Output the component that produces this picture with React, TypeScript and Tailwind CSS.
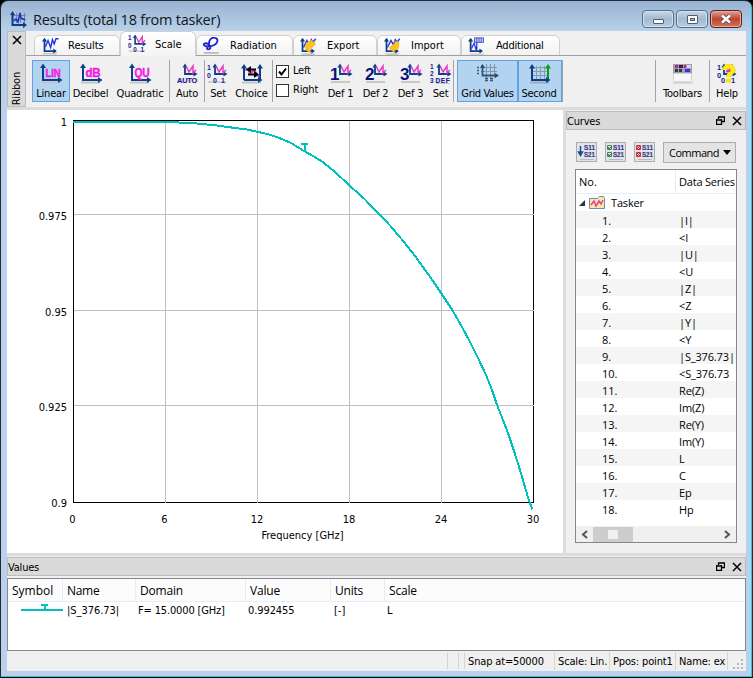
import React from 'react';

const NAVY = '#0d3f86';
const INK = '#1c1c90';
const PINK = '#f01fe0';

const CURVE =
  '66,11.5 121,11.5 122,12 172,12.5 190,13.5 210,15.5 226,17.7 240,19.5 250,21.7 262,24.500 273,28.2 284,33 297,41 306,46 315,51.5 327,61 343,76 357,88.500 372,104 383,115.5 397,132 408,146 417,158.500 426,171 434,183 445,199.5 455,217 463,232 471,248 479,265 485,280 490,295 496,310 501,323 507,341 513,360 518,377 522,391 525.5,399.5';

type IconProps = { children?: React.ReactNode; className?: string };

function Icon({ children, className = '' }: IconProps) {
  return (
    <svg width="24" height="22" viewBox="0 0 24 22" className={`block shrink-0 ${className}`} fill="none">
      {children}
    </svg>
  );
}

/* L-shaped pair of axes with arrow heads, origin at x,y */
function Axes({ x = 4, y = 17, w = 17, h = 14, shadow = true }) {
  return (
    <g>
      {shadow && <path d={`M${x - 2} ${y + 2.5}h${w + 2}`} stroke="#c4c4c4" strokeWidth="2" />}
      <path d={`M${x} ${y - h}v${h}h${w - 1}`} stroke={NAVY} strokeWidth="2" />
      <path d={`M${x - 3} ${y - h + 2}l3-4.500 3 4.500zM${x + w - 2} ${y - 3}l4.500 3-4.500 3z`} fill={NAVY} />
    </g>
  );
}

function SmallAxes({ x = 11, y = 11 }) {
  return (
    <g>
      <path d={`M${x} ${y - 8}v8h11`} stroke={NAVY} strokeWidth="1.8" />
      <path d={`M${x - 2.5} ${y - 6.5}l2.5-4 2.5 4zM${x + 8.5} ${y - 2.5}l4 2.5-4 2.5z`} fill={NAVY} />
      <path d={`M${x + 1} ${y - 8}l3 6 4-6v7l3-3`} stroke="#e63cc8" strokeWidth="1.5" />
    </g>
  );
}

function Glyph({ x, y, size = 7.5, fill = INK, children }: { x: number; y: number; size?: number; fill?: string; children: string }) {
  return (
    <text x={x} y={y} fontSize={size} fill={fill} fontWeight="700" fontFamily="Liberation Sans, sans-serif">
      {children}
    </text>
  );
}

function LetterIcon({ text, size = 11 }: { text: string; size?: number }) {
  return (
    <Icon>
      <Axes />
      <text x="6.5" y="14" fontSize={size} fontWeight="700" fill={PINK} stroke={PINK} strokeWidth=".5" textLength="15" lengthAdjust="spacingAndGlyphs" fontFamily="Liberation Sans, sans-serif">
        {text}
      </text>
    </Icon>
  );
}

const autoIcon = (
  <Icon>
    <SmallAxes x={10} y={11} />
    <text x="2" y="19.5" fontSize="8" fontWeight="700" fill={INK} stroke={INK} strokeWidth=".2" textLength="20" lengthAdjust="spacingAndGlyphs" fontFamily="Liberation Sans, sans-serif">
      AUTO
    </text>
  </Icon>
);

const setIcon = (
  <Icon>
    <path d="M2 19h18" stroke="#cfcfcf" strokeWidth="2" />
    <SmallAxes x={9} y={11} />
    <Glyph x={1} y={6.5} size={7}>1</Glyph>
    <Glyph x={1} y={15} size={7}>0</Glyph>
    <Glyph x={7} y={20} size={7}>0</Glyph>
    <Glyph x={15} y={20} size={7}>1</Glyph>
  </Icon>
);

const choiceIcon = (
  <Icon>
    <path d="M2 19.5h19" stroke="#c4c4c4" strokeWidth="2" />
    <path d="M4 3v14M20 3v14M4 17h16" stroke={NAVY} strokeWidth="2" />
    <path d="M1 5.500L4 1l3 4.500zM17 5.500L20 1l3 4.500zM18 14l4.500 3-4.500 3z" fill={NAVY} />
    <path d="M5 7l3-1 2 5 4-4 5 7" stroke="#e23ec8" strokeWidth="2" />
    <path d="M9 6.500h7M8 11.500h8" stroke="#000" strokeWidth="2" />
    <path d="M6 6.500l5-3.500v7zM19 11.500L14 8v7z" fill="#000" />
  </Icon>
);

function DefIcon({ n }: { n: string }) {
  return (
    <Icon>
      <path d="M2 19h19" stroke="#c9c9c9" strokeWidth="2" />
      <SmallAxes x={11} y={11} />
      <Glyph x={1} y={17} size={17} fill="#10107c">{n}</Glyph>
    </Icon>
  );
}

const defSetIcon = (
  <Icon>
    <path d="M7 20.500h14" stroke="#c9c9c9" />
    <SmallAxes x={10} y={11} />
    <Glyph x={1} y={6} size={6.5}>1</Glyph>
    <Glyph x={1} y={12.8} size={6.5}>2</Glyph>
    <Glyph x={1} y={19.5} size={6.5}>3</Glyph>
    <text x="6.5" y="19.5" fontSize="6.5" fontWeight="700" fill={INK} stroke={INK} strokeWidth=".2" textLength="14" fontFamily="Liberation Sans, sans-serif">DEF</text>
  </Icon>
);

const gridIcon = (
  <Icon>
    <path d="M10.500 1v14M14.500 1v14M18.500 1v14M5 4.500h16M5 8.500h16" stroke="#8493a8" />
    <path d="M6.500 2v10.500h14" stroke="#31527c" strokeWidth="1.800" />
    <path d="M4 5l2.500-4L9 5zM19 10l4 2.500-4 2.500z" fill="#274a78" />
    <path d="M1 4.500h3M1 7.500h3M1 10.500h3" stroke="#556" strokeWidth="1.500" strokeDasharray="2 1" />
    <path d="M9 15.500h3M9 17.500h3M14 15.500h3M14 17.500h3" stroke="#456" strokeWidth="1.300" />
  </Icon>
);

const secondIcon = (
  <Icon>
    <path d="M2 19.500h19" stroke="#9ba9ba" strokeWidth="2" />
    <path d="M8.500 3v13M12.500 3v13M16.500 3v13M4 4.500h16M4 8.500h16M4 12.500h16" stroke="#8a9aad" />
    <path d="M4 3v14h16" stroke={NAVY} strokeWidth="2" />
    <path d="M20 3v13" stroke="#0c9a1c" strokeWidth="2" />
    <path d="M17 5.500L20 1l3 4.500z" fill="#0c9a1c" />
    <path d="M1 5.500L4 1l3 4.500zM18 14l4.500 3-4.500 3z" fill={NAVY} />
  </Icon>
);

const toolbarsIcon = (
  <Icon>
    <rect x="2" y="1" width="19" height="10" fill="#a0a0a8" />
    <path d="M4 3.500h3M13 3.500h2" stroke="#b0249a" strokeWidth="3" />
    <path d="M8 3.500h4" stroke="#4a1250" strokeWidth="3" />
    <path d="M16 3.500h4" stroke="#d8d8f0" strokeWidth="3" />
    <path d="M4 7.500h8" stroke="#2f3d38" strokeWidth="3" strokeDasharray="3 1" />
    <path d="M14 7.500h5" stroke="#4326ed" strokeWidth="3" />
    <rect x="2.500" y="10.500" width="18" height="8" rx="1" fill="#f8f8fa" stroke="#d4d4da" />
    <path d="M2 20h20" stroke="#bdbdbd" />
  </Icon>
);

const helpIcon = (
  <Icon>
    <SmallAxes x={9} y={11} />
    <path d="M9.500 7C9.500 2 19 2 18 7.500c-.5 2.500-4.500 2.500-4.500 6.500" stroke="#e0c000" strokeWidth="4.800" />
    <path d="M9.500 7C9.500 2 19 2 18 7.500c-.5 2.500-4.500 2.500-4.500 6.500" stroke="#ffee10" strokeWidth="4" />
    <rect x="11" y="15.500" width="5" height="4" rx="1" fill="#ffe600" />
    <path d="M11 9l3-2 1 2" stroke="#e22bbd" strokeWidth="1.500" />
    <Glyph x={2} y={7}>1</Glyph>
    <Glyph x={2} y={15}>0</Glyph>
    <Glyph x={6} y={20}>0</Glyph>
    <Glyph x={16} y={20}>1</Glyph>
  </Icon>
);

const resultsTabIcon = (
  <Icon className="scale-[.88] origin-top-left">
    <path d="M2 19h16" stroke="#cacaca" strokeWidth="2" />
    <path d="M4 2v14h13" stroke={NAVY} strokeWidth="2" />
    <path d="M1 5l3-4 3 4zM14 13l4 3-4 3z" fill={NAVY} />
    <path d="M5 11l3-7 3 8 2-9 2 5 2-6h3" stroke="#1f35e8" strokeWidth="1.600" />
  </Icon>
);

const radiationIcon = (
  <Icon className="scale-[.88] origin-top-left">
    <path d="M2 18h17" stroke="#b9b9b9" strokeWidth="2" />
    <path d="M8 10C7 2 12 0 15 1c4 1 3 6-1 8-4 2-9 2-11 1-3-2 1-4 4-2 4 3 3 6 0 6-2 0-2-3 1-4" stroke="#1a22cf" strokeWidth="2" />
  </Icon>
);

function ArrowTabIcon({ flip = false }: { flip?: boolean }) {
  return (
    <Icon className="scale-[.88] origin-top-left">
      <path d="M3 19.500h15" stroke="#cacaca" strokeWidth="2" />
      <path d="M4 2v14h13" stroke={NAVY} strokeWidth="2" />
      <path d="M1 5l3-4 3 4zM14 13l4 3-4 3z" fill={NAVY} />
      <path d="M5 12l4-8 3 5 2-6 2 3 3-4" stroke="#1f35e8" strokeWidth="1.600" />
      <path
        d={flip ? 'M18 6v4c0 3-2 5-5 5v3l-6-5.500 6-5.500v3c2 0 2-2 0-5 3 0 5 0 5 1z' : 'M7 11c0-4 3-6 6-6V2.500l6 5.500-6 5.500v-3c-2 0-2 4 1 7-4 0-7-3-7-6.500z'}
        fill="#ffc21a"
        stroke="#e8a810"
        strokeWidth=".6"
      />
    </Icon>
  );
}

const additionalIcon = (
  <Icon className="scale-[.88] origin-top-left">
    <path d="M3 2v14h13" stroke={NAVY} strokeWidth="2" />
    <path d="M0 5l3-4 3 4zM13 13l4 3-4 3z" fill={NAVY} />
    <rect x="7.500" y="1" width="10" height="5" fill="#c9d0fa" stroke="#3b44bd" />
    <path d="M10 1v5M12.500 1v5M15 1v5" stroke="#3b44bd" strokeWidth=".9" />
    <path d="M4 13l3-6 2 7 1-4V6M10 7v8" stroke="#1f35e8" strokeWidth="1.400" />
    <path d="M2 19.500h16" stroke="#cacaca" strokeWidth="1.500" />
  </Icon>
);

const appIcon = (
  <svg width="17" height="17" viewBox="0 0 17 17" fill="none">
    <path d="M6.500 2v10M10.500 2v10M14.500 2v10M2 4.500h14M2 8.500h14" stroke="#6f86a2" />
    <path d="M2.500 2v12H15" stroke={NAVY} strokeWidth="2" />
    <path d="M0 4l2.500-4L5 4zM13 11l4 3-4 3z" fill={NAVY} />
    <path d="M4 10l2-2 2 3 2-9 1 5 4 2" stroke="#2232c8" strokeWidth="1.600" />
  </svg>
);

const CROSS = (
  <svg width="10" height="10" viewBox="0 0 10 10">
    <path d="M1 1l8 8M9 1L1 9" stroke="#000" strokeWidth="1.500" />
  </svg>
);

function Tab({ label, icon, className, textClass = '' }: { label: string; icon: React.ReactNode; className: string; textClass?: string }) {
  return (
    <div className={`flex shrink-0 rounded-t-md border border-[#d0d0d0] ${className}`}>
      <div className="w-5 h-5 shrink-0">{icon}</div>
      <span className={`whitespace-nowrap leading-[14px] ${textClass}`}>{label}</span>
    </div>
  );
}

function Tool({ label, icon, className, textClass = '' }: { label: string; icon: React.ReactNode; className: string; textClass?: string }) {
  return (
    <div className={`flex flex-col items-center shrink-0 h-[42px] pt-[3px] ${className}`}>
      {icon}
      <span className={`mt-[2px] whitespace-nowrap leading-[14px] ${textClass}`}>{label}</span>
    </div>
  );
}

function Sep({ className = '' }: { className?: string }) {
  return <div className={`w-px h-[42px] shrink-0 bg-[#a3a3a3] ${className}`} />;
}

function DockTitle({ title }: { title: string }) {
  return (
    <div className="flex items-center h-[19px] shrink-0 bg-[#dadada] border border-[#bcbcbc] pr-[3px]">
      <span className="flex-1 pt-px leading-[17px] tracking-[-0.2px]">{title}</span>
      <svg width="9" height="9" viewBox="0 0 9 9" fill="none" className="mr-[7px]">
        <path d="M2.500 3V.5M2 1h7M8.500 1v4.500H6M.5 3v5.500h5V3M0 4h6" stroke="#000" strokeWidth="1.300" />
      </svg>
      {CROSS}
    </div>
  );
}

const SERIES = ['|I|', '<I', '|U|', '<U', '|Z|', '<Z', '|Y|', '<Y', '|S_376.73|', '<S_376.73', 'Re(Z)', 'Im(Z)', 'Re(Y)', 'Im(Y)', 'L', 'C', 'Ep', 'Hp'];

function SButton({ kind }: { kind: 'arrow' | 'on' | 'off' }) {
  return (
    <div className="w-[21px] h-5 border border-[#adadad] bg-[#e4e4e6]">
      <svg width="19" height="18" viewBox="0 0 19 18" fill="none">
        <path d="M3 16.500h14" stroke="#bbb" />
        {kind === 'arrow' ? (
          <path d="M3.500 3v7M1.500 9h4l-2 3.500z" stroke="#174f9d" fill="#174f9d" strokeWidth="1.500" />
        ) : (
          <>
            <path d="M1.500 2.500h4v4h-4zM1.500 9.500h4v4h-4z" stroke={kind === 'on' ? '#438268' : '#b83545'} fill={kind === 'on' ? '#d9eadf' : '#f5cad0'} />
            <path d={kind === 'on' ? 'M2 4l1 2 3-3M2 11l1 2 3-3' : 'M2 3l3 3M5 3L2 6M2 10l3 3M5 10l-3 3'} stroke={kind === 'on' ? '#157234' : '#df1522'} />
          </>
        )}
        <g fontSize="7" fontWeight="700" fill="#3a3a90" stroke="#3a3a90" strokeWidth=".2" fontFamily="Liberation Sans, sans-serif">
          <text x="7" y="7.200" textLength="11" lengthAdjust="spacingAndGlyphs">S11</text>
          <text x="7" y="14.200" textLength="11" lengthAdjust="spacingAndGlyphs">S21</text>
        </g>
      </svg>
    </div>
  );
}

function TitleBar() {
  return (
    <div className="flex items-start h-[29px] shrink-0 pl-[9px] pr-[10px]">
      <div className="pt-[9px]">{appIcon}</div>
      <span className="ml-[6px] mt-[8px] font-['Open_Sans',sans-serif] [font-stretch:normal] text-[14.5px] leading-5 tracking-[-0.24px] text-[#101820] whitespace-nowrap">
        Results (total 18 from tasker)
      </span>
      <div className="ml-auto mt-[8px] flex gap-[2px]">
        <div className="flex items-center justify-center w-8 h-[18px] rounded-sm border border-[#566d88] bg-linear-to-b from-[#c8d8ea] via-[#a2b9d2] to-[#b8cfe8] shadow-[inset_0_0_0_1px_#d4e2f0]">
          <div className="mt-1 w-[11px] h-[5px] rounded-[1px] border border-[#525c6c] bg-white" />
        </div>
        <div className="flex items-center justify-center w-8 h-[18px] rounded-sm border border-[#566d88] bg-linear-to-b from-[#c8d8ea] via-[#a2b9d2] to-[#b8cfe8] shadow-[inset_0_0_0_1px_#d4e2f0]">
          <div className="w-[11px] h-[9px] rounded-[1px] border border-[#525c6c] bg-white p-[2px]">
            <div className="w-[5px] h-[3px] border border-[#525c6c] bg-[#a2b9d2]" />
          </div>
        </div>
        <div className="flex items-center justify-center w-8 h-[18px] rounded-sm border border-[#5c2020] bg-linear-to-b from-[#dfa196] via-[#bd4430] to-[#d07558] shadow-[inset_0_0_0_1px_#e4aea4]">
          <svg width="12" height="10" viewBox="0 0 12 10">
            <path d="M2 1.500l8 7M10 1.500l-8 7" stroke="#5b4a55" strokeWidth="4" />
            <path d="M2 1.500l8 7M10 1.500l-8 7" stroke="#fff" strokeWidth="2.400" />
          </svg>
        </div>
      </div>
    </div>
  );
}

function Ribbon() {
  return (
    <div className="flex h-[76px] shrink-0">
      <div className="flex flex-col items-center w-[19px] border border-[#bcbcbc] bg-[#dadada] pt-[3px]">
        {CROSS}
        <span className="mt-auto mb-[1px] [writing-mode:vertical-rl] rotate-180 leading-[15px] tracking-[-0.2px]">Ribbon</span>
      </div>
      <div className="flex-1 min-w-0">
        <div className="relative flex items-end h-[25px] pl-2">
          <Tab label="Results" icon={resultsTabIcon} className="w-[86px] h-[21px] pl-[6px] pt-px bg-linear-to-b from-white to-[#f2f2f2]" textClass="ml-[7px] mt-[2px]" />
          <Tab label="Scale" icon={<div className="scale-[.9] origin-top-left">{setIcon}</div>} className="w-[76px] h-[25px] pl-[6px] pt-[2px] bg-linear-to-b from-white to-[#f4f4f4] border-b-0" textClass="ml-[8px] mt-[4px]" />
          <Tab label="Radiation" icon={radiationIcon} className="w-[97px] h-[21px] pl-[5px] pt-px bg-linear-to-b from-white to-[#f2f2f2]" textClass="ml-[8px] mt-[2px]" />
          <Tab label="Export" icon={<ArrowTabIcon />} className="w-[84px] h-[21px] pl-[5px] pt-px bg-linear-to-b from-white to-[#f2f2f2]" textClass="ml-[8px] mt-[2px]" />
          <Tab label="Import" icon={<ArrowTabIcon flip />} className="w-[84px] h-[21px] pl-[5px] pt-px bg-linear-to-b from-white to-[#f2f2f2]" textClass="ml-[8px] mt-[2px]" />
          <Tab label="Additional" icon={additionalIcon} className="w-[99px] h-[21px] pl-[6px] pt-px bg-linear-to-b from-white to-[#f2f2f2]" textClass="ml-[8px] mt-[2px] tracking-[-0.2px]" />
          <div className="absolute left-0 bottom-0 w-[94px] h-px bg-[#a0a0a0]" />
          <div className="absolute left-[170px] right-0 bottom-0 h-px bg-[#a0a0a0]" />
        </div>
        <div className="flex pt-[4px] pl-[6px] tracking-[-0.2px]">
          <Tool label="Linear" icon={<LetterIcon text="LIN" />} className="w-[38px] bg-[#b3d4f1] outline outline-[#62a2e4] -outline-offset-1" />
          <Tool label="Decibel" icon={<LetterIcon text="dB" size={12} />} className="w-[41px]" />
          <Tool label="Quadratic" icon={<LetterIcon text="QU" size={12} />} className="w-[58px]" />
          <Sep />
          <Tool label="Auto" icon={autoIcon} className="w-[34px]" />
          <Sep />
          <Tool label="Set" icon={setIcon} className="w-[26px]" />
          <Tool label="Choice" icon={choiceIcon} className="w-[41px]" />
          <Sep />
          <div className="flex flex-col gap-[5px] w-[50px] pl-[3px] pt-[4px]">
            <div className="flex items-center gap-[4px] h-[14px]">
              <div className="w-[13px] h-[13px] border border-[#333] bg-white">
                <svg width="11" height="11" viewBox="0 0 11 11" fill="none">
                  <path d="M2 5.500l2.500 3L9 2.500" stroke="#000" strokeWidth="2" />
                </svg>
              </div>
              <span className="pt-px">Left</span>
            </div>
            <div className="flex items-center gap-[4px] h-[14px]">
              <div className="w-[13px] h-[13px] border border-[#333] bg-white" />
              <span className="pt-px">Right</span>
            </div>
          </div>
          <Tool label="Def 1" icon={<DefIcon n="1" />} className="w-[35px]" />
          <Tool label="Def 2" icon={<DefIcon n="2" />} className="w-[35px]" />
          <Tool label="Def 3" icon={<DefIcon n="3" />} className="w-[35px]" />
          <Tool label="Set" icon={defSetIcon} className="w-[25px]" />
          <Sep className="mr-[3px]" />
          <Tool label="Grid Values" icon={gridIcon} className="w-[61px] bg-[#b3d4f1] outline outline-[#62a2e4] -outline-offset-1" textClass="tracking-[-0.35px]" />
          <Tool label="Second" icon={secondIcon} className="w-[44px] bg-[#b3d4f1] outline outline-[#62a2e4] -outline-offset-1" textClass="pr-[2px]" />
          <Sep />
          <Sep className="ml-[92px]" />
          <Tool label="Toolbars" icon={toolbarsIcon} className="w-[53px]" />
          <Sep />
          <Tool label="Help" icon={helpIcon} className="w-[34px]" />
        </div>
      </div>
    </div>
  );
}

function Chart() {
  return (
    <div className="w-[556px] h-[443px] shrink-0 bg-white">
      <svg width="556" height="443" viewBox="0 0 556 443" fill="none">
        <rect x="66.5" y="10.5" width="460" height="382" stroke="#000" shapeRendering="crispEdges" />
        <path
          d="M158.5 11v382M250.500 11v382M342.500 11v382M434.500 11v382M67 104.500h460M67 200.500h460M67 295.500h460"
          stroke="#c0c0c0"
          shapeRendering="crispEdges"
        />
        <polyline points={CURVE} stroke="#00c0bd" strokeWidth="2" shapeRendering="crispEdges" />
        <path d="M294 34h7M297.500 34v8" stroke="#00c0bd" strokeWidth="2" shapeRendering="crispEdges" />
        <g fill="#000" fontSize="11" fontFamily="DejaVu Sans Condensed, DejaVu Sans" fontStretch="condensed">
          <g textAnchor="end">
            <text x="60" y="16">1</text>
            <text x="60" y="110">0.975</text>
            <text x="60" y="206">0.95</text>
            <text x="60" y="301">0.925</text>
            <text x="60" y="397">0.9</text>
          </g>
          <g textAnchor="middle">
            <text x="65.500" y="413">0</text>
            <text x="157.500" y="413">6</text>
            <text x="250" y="413">12</text>
            <text x="342" y="413">18</text>
            <text x="434" y="413">24</text>
            <text x="526" y="413">30</text>
            <text x="295.500" y="429">Frequency [GHz]</text>
          </g>
        </g>
      </svg>
    </div>
  );
}

function CurvesPanel() {
  return (
    <div className="flex-1 flex flex-col min-w-0 pt-[1px]">
      <DockTitle title="Curves" />
      <div className="flex items-center gap-2 pl-[10px] mt-[11px] h-[22px]">
        <SButton kind="arrow" />
        <SButton kind="on" />
        <SButton kind="off" />
        <div className="flex items-center w-[73px] h-[21px] border border-[#adadad] bg-[#e4e4e4] pl-[5px] text-[11px] tracking-[-0.5px] font-['Open_Sans',sans-serif] [font-stretch:normal]">
          <span className="pt-px leading-[18px] flex-1">Command</span>
          <svg width="8" height="5" viewBox="0 0 8 5" className="mr-[4px] shrink-0">
            <path d="M0 0h8L4 5z" fill="#000" />
          </svg>
        </div>
      </div>
      <div className="flex flex-col ml-[9px] mt-[6px] w-[162px] h-[374px] border border-[#828790] bg-white font-['Open_Sans',sans-serif] [font-stretch:normal] text-[11px] overflow-hidden">
        <div className="flex h-[24px] shrink-0 items-center border-b border-[#e2eefb]">
          <span className="w-[100px] pl-[3px] leading-[24px] h-full border-r border-[#e2eefb]">No.</span>
          <span className="pl-[3px] pt-px whitespace-nowrap tracking-[-0.2px]">Data Series</span>
        </div>
        <div className="flex h-[17px] shrink-0 items-center">
          <svg width="6" height="6" viewBox="0 0 6 6" className="ml-[3px]">
            <path d="M6 0v6H0z" fill="#303030" />
          </svg>
          <svg width="17" height="14" viewBox="0 0 17 14" fill="none" className="ml-[4px]">
            <path d="M.5 12.500v-10h8l2-2h4l1 2v10z" fill="#f4eda0" stroke="#6c8dac" />
            <path d="M2 9l3-4 2 5 3-5 2 3 2-4" stroke="#e83bb4" strokeWidth="1.500" />
          </svg>
          <span className="ml-[5px] pt-[2px] tracking-[-0.15px]">Tasker</span>
        </div>
        {SERIES.map((name, i) => (
          <div key={name} className={`flex h-[17px] shrink-0 items-center leading-[17px] ${i % 2 === 0 ? 'bg-[#f5f5f5]' : ''}`}>
            <span className="w-[103px] pt-px pl-[26px]">{i + 1}.</span>
            <span className="pt-px whitespace-nowrap tracking-[-0.15px]">{name}</span>
          </div>
        ))}
        <div className="mt-auto flex items-center h-4 shrink-0 bg-[#f0f0f0]">
          <svg width="17" height="9" viewBox="0 0 17 9" fill="none">
            <path d="M11 1L7 4.500 11 8" stroke="#555" strokeWidth="2" />
          </svg>
          <div className="flex items-center justify-center w-10 h-[15px] bg-[#cdcdcd]">
            <div className="w-[10px] h-[9px] bg-[#f0f0f0]" />
          </div>
          <svg width="17" height="9" viewBox="0 0 17 9" fill="none" className="ml-auto">
            <path d="M6 1l4 3.500L6 8" stroke="#555" strokeWidth="2" />
          </svg>
        </div>
      </div>
    </div>
  );
}

function ValuesPanel() {
  return (
    <>
      <DockTitle title="Values" />
      <div className="mt-[2px] h-[73px] shrink-0 border border-[#828790] bg-white">
        <div className="flex h-[23px] items-center border-b border-[#e2eefb] bg-[#fcfcfc] font-['Open_Sans',sans-serif] [font-stretch:normal] text-[12px] leading-[23px]">
          <span className="w-[55px] pl-[4px] border-r border-[#e2eefb]">Symbol</span>
          <span className="w-[73px] pl-[4px] border-r border-[#e2eefb] tracking-[-0.3px]">Name</span>
          <span className="w-[110px] pl-[4px] border-r border-[#e2eefb] tracking-[-0.2px]">Domain</span>
          <span className="w-[85px] pl-[4px] border-r border-[#e2eefb] tracking-[-0.2px]">Value</span>
          <span className="w-[54px] pl-[4px] border-r border-[#e2eefb] tracking-[-0.2px]">Units</span>
          <span className="pl-[4px] tracking-[-0.2px]">Scale</span>
        </div>
        <div className="flex items-center h-[17px] leading-[17px]">
          <svg width="59" height="14" viewBox="0 0 59 14" fill="none">
            <path d="M13 6h42M33 1h7M36.500 1v5" stroke="#00c0bd" strokeWidth="2" shapeRendering="crispEdges" />
          </svg>
          <span className="w-[71px] tracking-[-0.05px]">|S_376.73|</span>
          <span className="w-[110px] tracking-[-0.15px]">F= 15.0000 [GHz]</span>
          <span className="w-[86px] tracking-[-0.1px]">0.992455</span>
          <span className="w-[53px]">[-]</span>
          <span>L</span>
        </div>
      </div>
    </>
  );
}

function StatusBar() {
  return (
    <div className="flex flex-1 items-center justify-end text-[11px] leading-4 whitespace-nowrap tracking-[-0.15px]">
      <div className="w-px h-4 bg-[#d4d4d4]" />
      <div className="ml-[10px] w-px h-4 bg-[#d4d4d4]" />
      <div className="ml-[5px] w-px h-4 bg-[#d4d4d4]" />
      <span className="w-[90px] pt-[2px] pl-[3px] border-r border-[#d4d4d4]">Snap at=50000</span>
      <span className="w-[55px] pt-[2px] pl-[3px] border-r border-[#d4d4d4]">Scale: Lin.</span>
      <span className="w-[66px] pt-[2px] pl-[3px] border-r border-[#d4d4d4]">Ppos: point1</span>
      <span className="w-[52px] pt-[2px] pl-[3px] border-r border-[#d4d4d4]">Name: ex</span>
      <svg width="18" height="16" viewBox="0 0 18 16" className="mt-1">
        <path d="M13 4h2v2h-2zM9 8h2v2H9zM13 8h2v2h-2zM5 12h2v2H5zM9 12h2v2H9zM13 12h2v2h-2z" fill="#b8b8b8" />
      </svg>
    </div>
  );
}

export default function App() {
  return (
    <div className="w-[753px] h-[678px] overflow-hidden bg-black font-['DejaVu_Sans_Condensed','DejaVu_Sans',sans-serif] text-[11px] [font-stretch:condensed] text-black">
      <div className="flex flex-col w-full h-full rounded-t-lg border border-[#222a33] border-b-black bg-linear-to-b from-[#98b3d2] to-[#b9d1ea] to-[30px] shadow-[inset_-1px_-1px_0_#28c8e8] pt-px pb-[6px]">
        <TitleBar />
        <div className="flex flex-col flex-1 ml-[6px] mr-[6px] min-h-0 bg-[#f0f0f0]">
          <Ribbon />
          <div className="h-[3px] shrink-0 bg-[#dcdcdc]" />
          <div className="flex h-[443px] shrink-0">
            <Chart />
            <div className="w-[3px] shrink-0 bg-[#dcdcdc]" />
            <CurvesPanel />
          </div>
          <div className="h-[3px] mb-px shrink-0 bg-[#dcdcdc]" />
          <ValuesPanel />
          <StatusBar />
        </div>
      </div>
    </div>
  );
}
